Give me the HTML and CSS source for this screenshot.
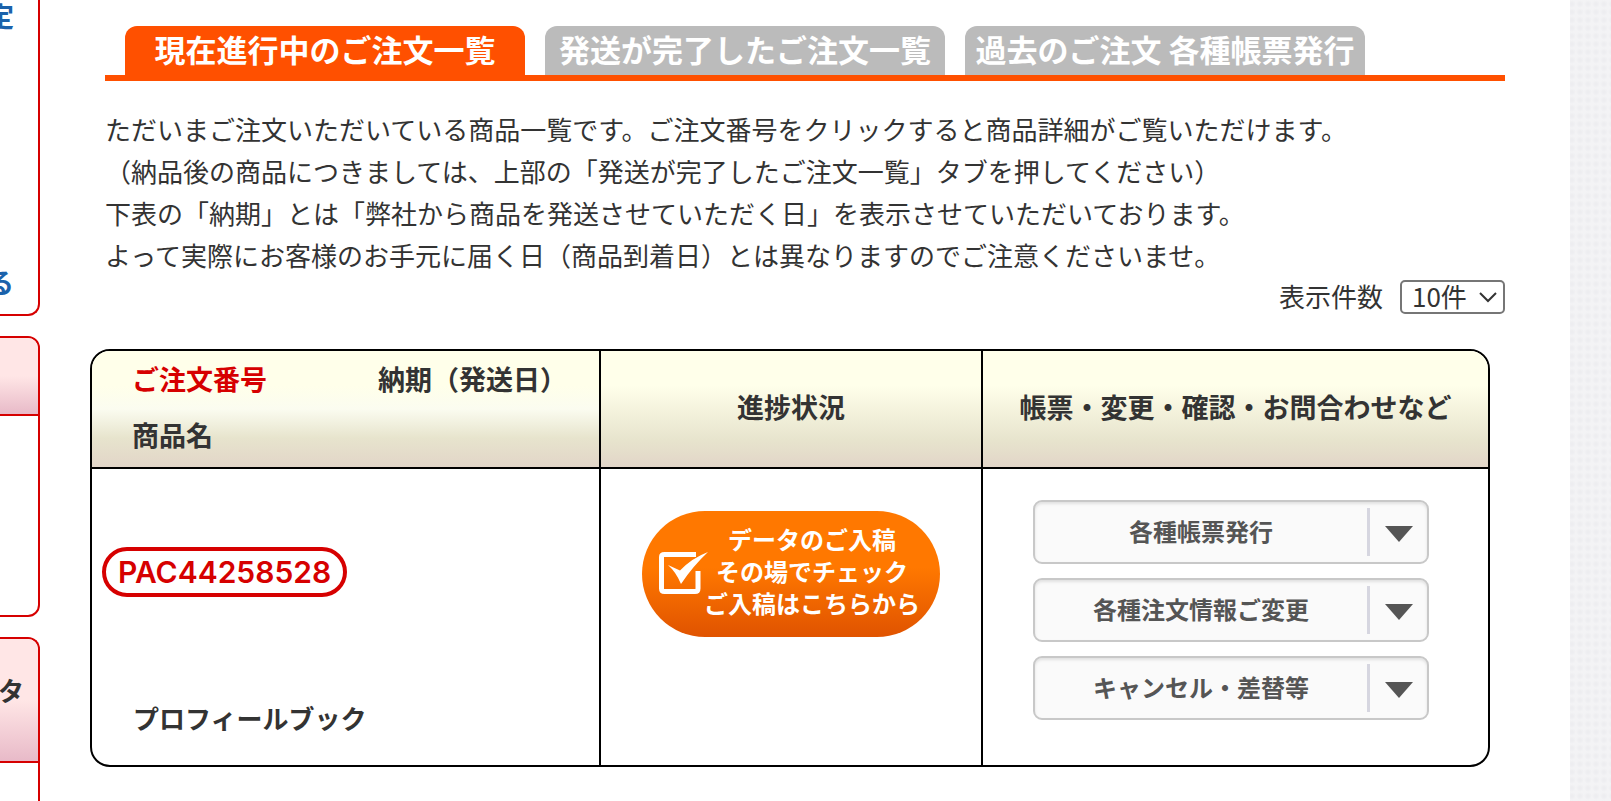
FILE: index.html
```html
<!DOCTYPE html>
<html lang="ja">
<head>
    <meta charset="UTF-8">
    <title>現在進行中のご注文一覧</title>
    <link rel="stylesheet" href="styles.css">
</head>
<body>
    <div class="page">
        <aside class="sidebar">
            <div class="side_box side_links">
                <a href="#">定</a>
                <a href="#">る</a>
            </div>
            <div class="side_box">
                <div class="side_head"></div>
                <div class="side_body"></div>
            </div>
            <div class="side_box side_last">
                <div class="side_head side_head_tall">タ</div>
            </div>
        </aside>

        <main class="content">
            <nav class="tabs">
                <a href="#" class="tab active">現在進行中のご注文一覧</a>
                <a href="#" class="tab">発送が完了したご注文一覧</a>
                <a href="#" class="tab">過去のご注文 各種帳票発行</a>
            </nav>

            <p class="lead">
                ただいまご注文いただいている商品一覧です。ご注文番号をクリックすると商品詳細がご覧いただけます。<br>
                （納品後の商品につきましては、上部の「発送が完了したご注文一覧」タブを押してください）<br>
                下表の「納期」とは「弊社から商品を発送させていただく日」を表示させていただいております。<br>
                よって実際にお客様のお手元に届く日（商品到着日）とは異なりますのでご注意くださいませ。
            </p>

            <div class="count">
                <label for="count">表示件数</label>
                <span class="select_wrap">
                    <select id="count">
                        <option>10件</option>
                        <option>20件</option>
                        <option>50件</option>
                    </select>
                    <svg class="chevron" width="18" height="11" viewBox="0 0 18 11"><path d="M1 1l8 8 8-8" fill="none" stroke="#333" stroke-width="2"/></svg>
                </span>
            </div>

            <div class="orders">
                <table>
                    <colgroup>
                        <col class="col_order">
                        <col class="col_status">
                        <col>
                    </colgroup>
                    <thead>
                        <tr>
                            <th class="th_order">
                                <div class="order_line"><span class="red">ご注文番号</span><span>納期（発送日）</span></div>
                                <div class="order_line">商品名</div>
                            </th>
                            <th>進捗状況</th>
                            <th>帳票・変更・確認・お問合わせなど</th>
                        </tr>
                    </thead>
                    <tbody>
                        <tr>
                            <td class="td_order">
                                <a href="#" class="order_no">PAC44258528</a>
                                <div class="product">プロフィールブック</div>
                            </td>
                            <td class="td_status">
                                <a href="#" class="data_btn">
                                    <svg width="50" height="44" viewBox="0 0 50 44">
                                        <path d="M37 3.500H5.500Q2.500 3.500 2.500 6V37.500Q2.500 40.500 5.500 40.500H36Q39 40.500 39 37.500V20" fill="none" stroke="#fff" stroke-width="5"/>
                                        <path d="M9 14L21 19.500Q33 7 49 1Q34 15 22 33Q17 21 9 14Z" fill="#fff"/>
                                    </svg>
                                    <span>データのご入稿<br>その場でチェック<br>ご入稿はこちらから</span>
                                </a>
                            </td>
                            <td class="td_menu">
                                <button type="button" class="menu_btn"><span class="menu_text">各種帳票発行</span><span class="menu_arrow"></span></button>
                                <button type="button" class="menu_btn"><span class="menu_text">各種注文情報ご変更</span><span class="menu_arrow"></span></button>
                                <button type="button" class="menu_btn"><span class="menu_text">キャンセル・差替等</span><span class="menu_arrow"></span></button>
                            </td>
                        </tr>
                    </tbody>
                </table>
            </div>
        </main>
    </div>
</body>
</html>
```

FILE: styles.css
```css
* {
    box-sizing: border-box;
}
body {
    margin: 0;
    padding-right: 41px;
    background: #f3f3f5 radial-gradient(#ededf0 20%, #f3f3f5 70%) 0 0 / 8px 8px;
    font-family: "Noto Sans CJK JP", sans-serif;
    font-size: 26px;
    line-height: 42px;
    color: #333;
}
a {
    text-decoration: none;
}
.page {
    display: flex;
    min-height: 100vh;
    background: #fff;
}

/* sidebar */
.sidebar {
    flex: none;
    display: flex;
    flex-direction: column;
    gap: 20px;
    width: 40px;
}
.side_box {
    margin-left: -20px;
    border: 2px solid #d60000;
    border-radius: 12px;
    background: #fff;
    overflow: hidden;
    font-weight: bold;
    text-align: right;
}
.side_links {
    display: flex;
    flex-direction: column;
    justify-content: space-between;
    height: 316px;
    padding: 0 24px 16px 0;
    border-top: 0;
    border-top-right-radius: 0;
    font-size: 27px;
    line-height: 32px;
}
.side_links a {
    display: flex;
    justify-content: flex-end;
    color: #1b62ab;
}
.side_head {
    height: 78px;
    border-bottom: 2px solid #d60000;
    background: linear-gradient(#ffe6e6 50%, #e8bac8);
}
.side_head_tall {
    height: 124px;
    padding: 30px 14px 0 0;
}
.side_body {
    height: 199px;
}
.side_last {
    flex: 1;
    border-bottom: 0;
    border-bottom-right-radius: 0;
}

/* main */
.content {
    flex: 1;
    min-width: 0;
    padding: 26px 65px 0;
}
.tabs {
    display: flex;
    gap: 20px;
    padding-left: 20px;
    border-bottom: 6px solid #ff5000;
}
.tab {
    width: 400px;
    padding-bottom: 4px;
    border-radius: 12px 12px 0 0;
    background: #bbb;
    color: #fff;
    font-size: 31px;
    font-weight: bold;
    line-height: 45px;
    text-align: center;
    white-space: nowrap;
}
.tab.active {
    background: #ff5000;
}
.lead {
    margin: 27px 0 0;
}
.count {
    display: flex;
    justify-content: flex-end;
    align-items: center;
    gap: 17px;
    height: 34px;
    margin-top: 4px;
}
.count label {
    padding-bottom: 2px;
}
.select_wrap {
    position: relative;
}
.count select {
    display: block;
    appearance: none;
    width: 105px;
    height: 34px;
    padding: 0 0 2px 10px;
    border: 2px solid #767676;
    border-radius: 5px;
    background: #fff;
    color: #333;
    font: inherit;
    line-height: 28px;
}
.chevron {
    position: absolute;
    top: 12px;
    right: 8px;
    pointer-events: none;
}

/* order table */
.orders {
    margin: 35px 15px 0 -15px;
    border: 2px solid #000;
    border-radius: 20px;
    overflow: hidden;
}
table {
    width: 100%;
    table-layout: fixed;
    border-spacing: 0;
}
.col_order {
    width: 509px;
}
.col_status {
    width: 382px;
}
th,
td {
    padding: 0;
    border-right: 2px solid #000;
}
th:last-child,
td:last-child {
    border-right: 0;
}
th {
    height: 118px;
    padding-bottom: 4px;
    border-bottom: 2px solid #000;
    background: linear-gradient(#ffffea 30%, #e7e4cd 77%, #e2d5c8);
    font-size: 27px;
}
.th_order {
    background: linear-gradient(#ffffea 30%, #fbfcf0 50%, #e7e4cd 75%, #e2d5c8);
    text-align: left;
}
.order_line {
    display: flex;
    justify-content: space-between;
    padding: 0 32px 0 40px;
    line-height: 56px;
}
.red {
    color: #d60000;
}
td {
    height: 296px;
    vertical-align: top;
}
.td_order {
    padding: 78px 10px 0;
}
.order_no {
    display: inline-block;
    padding: 0 12px;
    border: 4px solid #d60000;
    border-radius: 25px;
    color: #d60000;
    font-family: Inter, sans-serif;
    font-size: 30px;
    font-weight: 600;
    line-height: 42px;
    vertical-align: top;
}
.product {
    margin: 92px 0 0 31px;
    font-weight: bold;
    line-height: 58px;
}
.td_status {
    padding-top: 42px;
}
.data_btn {
    display: flex;
    align-items: center;
    width: 298px;
    height: 126px;
    margin: 0 auto;
    padding: 0 20px 6px 17px;
    border-radius: 63px;
    background: linear-gradient(#ff7800 45%, #e05300);
    color: #fff;
    font-size: 24px;
    font-weight: bold;
    line-height: 32px;
}
.data_btn svg {
    flex: none;
    margin: 4px -5px 0 0;
}
.data_btn span {
    flex: 1;
    text-align: center;
    white-space: nowrap;
}
.td_menu {
    padding: 31px 59px 0 50px;
}
.menu_btn {
    display: flex;
    align-items: center;
    width: 100%;
    height: 64px;
    margin-bottom: 14px;
    padding: 0;
    border: 2px solid #c8c8c8;
    border-radius: 9px;
    background: #fafafa;
    box-shadow: inset 0 2px 3px rgba(0, 0, 0, 0.1);
    color: #555;
    font: bold 24px "Noto Sans CJK JP", sans-serif;
}
.menu_text {
    flex: 1;
    padding-bottom: 4px;
}
.menu_arrow {
    display: flex;
    justify-content: center;
    align-items: center;
    width: 60px;
    height: 48px;
    border-left: 3px solid #d6d6e0;
}
.menu_arrow::after {
    content: "";
    margin-top: 4px;
    border: 14px solid transparent;
    border-top: 16px solid #555;
    border-bottom: 0;
}
```
